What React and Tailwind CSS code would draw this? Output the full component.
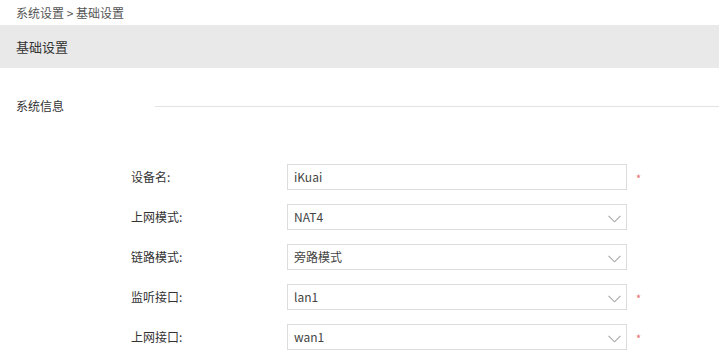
const FONT = { fontFamily: '"Microsoft YaHei", "Noto Sans CJK SC", "Liberation Sans", sans-serif' }

const rows = [
  { label: '设备名:', value: 'iKuai', select: false, required: true },
  { label: '上网模式:', value: 'NAT4', select: true, required: false },
  { label: '链路模式:', value: '旁路模式', select: true, required: false },
  { label: '监听接口:', value: 'lan1', select: true, required: true },
  { label: '上网接口:', value: 'wan1', select: true, required: true },
]

function Chevron() {
  return (
    <svg width="13" height="8" viewBox="0 0 13 8" className="absolute right-[5px] top-[10px]">
      <path d="M0.5 0.8 L6.5 6.8 L12.5 0.8" fill="none" stroke="#a8a8a8" strokeWidth="1.1" />
    </svg>
  )
}

function FieldRow({ label, value, select, required }) {
  return (
    <div className="flex items-center h-[40px]">
      <div className="w-[156px] pl-[131px] shrink-0 text-[12px] text-[#333] whitespace-nowrap">{label}</div>
      <div className="w-[131px] shrink-0" />
      <div className="relative w-[340px] h-[26px] border border-[#dcdcdc] bg-white flex items-center pl-[6px] text-[12px] text-[#444]">
        {value}
        {select && <Chevron />}
      </div>
      {required && <span className="ml-[9px] mt-[3px] text-[11px] text-[#e86c6c]">*</span>}
    </div>
  )
}

export default function App() {
  return (
    <div className="w-[719px] h-[359px] bg-white overflow-hidden" style={FONT}>
      <div className="h-[25px] px-4 flex items-center text-[12px] text-[#555] whitespace-pre">
        系统设置 &gt; 基础设置
      </div>
      <div className="h-[43px] bg-[#e9e9e9] px-4 flex items-center text-[13px] text-[#333]">
        基础设置
      </div>
      <div className="flex items-center mt-[28px] h-[20px]">
        <span className="pl-4 w-[155px] shrink-0 text-[12px] text-[#333]">系统信息</span>
        <div className="flex-1 h-px bg-[#e3e3e3]" />
      </div>
      <div className="mt-[41px]">
        {rows.map(r => (
          <FieldRow key={r.label} {...r} />
        ))}
      </div>
    </div>
  )
}
